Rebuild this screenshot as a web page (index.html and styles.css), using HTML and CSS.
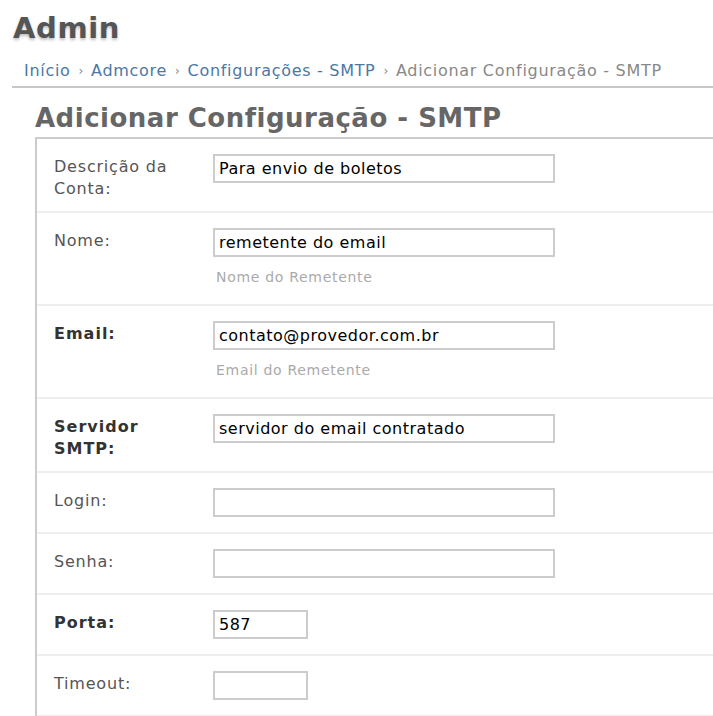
FILE: index.html
```html
<!DOCTYPE html>
<html lang="pt-BR">
<head>
<meta charset="utf-8">
<title>Adicionar Configuração - SMTP</title>
<link rel="stylesheet" href="styles.css">
</head>
<body>
<div class="page">
  <header class="header">
    <div class="brand">Admin</div>
  </header>
  <nav class="breadcrumbs">
    <a href="#">Início</a><span class="sep">›</span><a href="#">Admcore</a><span class="sep">›</span><a href="#">Configurações - SMTP</a><span class="sep">›</span><span class="current">Adicionar Configuração - SMTP</span>
  </nav>
  <main class="content">
    <h1 class="title">Adicionar Configuração - SMTP</h1>
    <form class="module">
      <div class="row">
        <label class="label">Descrição da Conta:</label>
        <div class="field"><input class="input wide" type="text" value="Para envio de boletos"></div>
      </div>
      <div class="row">
        <label class="label">Nome:</label>
        <div class="field"><input class="input wide" type="text" value="remetente do email"><p class="help">Nome do Remetente</p></div>
      </div>
      <div class="row">
        <label class="label required">Email:</label>
        <div class="field"><input class="input wide" type="text" value="contato@provedor.com.br"><p class="help">Email do Remetente</p></div>
      </div>
      <div class="row">
        <label class="label required">Servidor SMTP:</label>
        <div class="field"><input class="input wide" type="text" value="servidor do email contratado"></div>
      </div>
      <div class="row">
        <label class="label">Login:</label>
        <div class="field"><input class="input wide" type="text" value=""></div>
      </div>
      <div class="row">
        <label class="label">Senha:</label>
        <div class="field"><input class="input wide" type="password" value=""></div>
      </div>
      <div class="row">
        <label class="label required">Porta:</label>
        <div class="field"><input class="input short" type="text" value="587"></div>
      </div>
      <div class="row">
        <label class="label">Timeout:</label>
        <div class="field"><input class="input short" type="text" value=""></div>
      </div>
    </form>
  </main>
</div>
</body>
</html>
```
FILE: styles.css
```css
html, body {
  margin: 0;
  padding: 0;
  background: #fff;
}
body {
  font-family: "DejaVu Sans", Verdana, sans-serif;
  color: #333;
}
.header {
  padding: 11px 0 0 13px;
  height: 44px;
  box-sizing: border-box;
}
.brand {
  font-size: 29px;
  font-weight: bold;
  line-height: 34px;
  letter-spacing: 0.6px;
  color: #555;
  text-shadow: 0 2px 3px rgba(0, 0, 0, 0.25);
}
.breadcrumbs {
  margin: 0 0 0 12px;
  padding: 16px 0 3px 12px;
  font-size: 16px;
  line-height: 22px;
  letter-spacing: 0.7px;
  border-bottom: 2px solid #c8c8c8;
  color: #888;
  white-space: nowrap;
  overflow: hidden;
}
.breadcrumbs a {
  color: #4b78a6;
  text-decoration: none;
}
.breadcrumbs .sep {
  font-size: 12px;
  color: #888;
  padding: 0 7px 0 8px;
  position: relative;
  top: -1px;
}
.breadcrumbs .current {
  color: #888;
}
.content {
  padding: 0 0 0 35px;
}
.title {
  margin: 0;
  padding: 15px 0 4px 0;
  font-size: 26px;
  line-height: 30px;
  letter-spacing: 0.5px;
  font-weight: bold;
  color: #666;
}
.module {
  margin: 0;
  border-top: 2px solid #ccc;
  border-left: 2px solid #ccc;
}
.row {
  display: flex;
  align-items: flex-start;
  padding: 15px 17px 12px 17px;
  border-bottom: 2px solid #eeeeee;
}
.label {
  width: 138px;
  padding: 2px 21px 0 0;
  flex: none;
  font-size: 16px;
  line-height: 21.5px;
  letter-spacing: 0.8px;
  color: #555;
}
.label.required {
  font-weight: bold;
  letter-spacing: 1px;
  color: #333;
}
.field {
  padding-bottom: 3px;
}
.input {
  display: block;
  box-sizing: border-box;
  height: 29px;
  margin: 0;
  padding: 2px 4px;
  border: 2px solid #cccccc;
  font-family: "DejaVu Sans", Verdana, sans-serif;
  font-size: 16px;
  letter-spacing: 0.5px;
  color: #000;
  background: #fff;
  outline: none;
}
.input.wide {
  width: 342px;
}
.input.short {
  width: 95px;
}
.help {
  margin: 8px 0 0 0;
  padding: 0 0 0 3px;
  font-size: 14px;
  line-height: 24px;
  letter-spacing: 0.7px;
  color: #aaa;
}
```
